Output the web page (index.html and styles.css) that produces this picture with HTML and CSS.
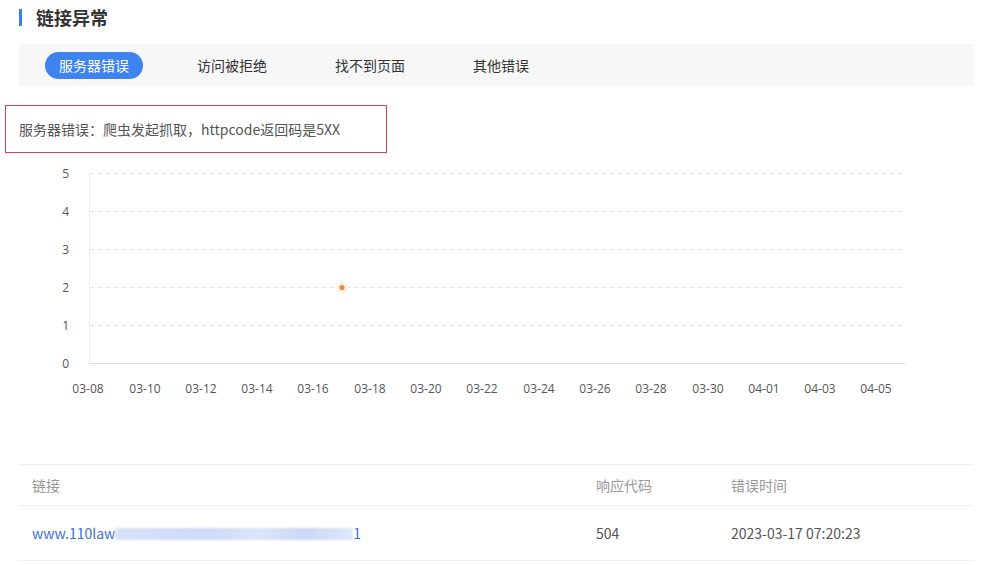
FILE: index.html
```html
<!DOCTYPE html>
<html lang="zh-CN">
<head>
<meta charset="utf-8">
<title>链接异常</title>
<link rel="stylesheet" href="styles.css">
</head>
<body>
<div class="page">
  <div class="title"><span class="title-bar"></span><h2>链接异常</h2></div>

  <div class="tabs">
    <span class="tab active">服务器错误</span>
    <span class="tab">访问被拒绝</span>
    <span class="tab">找不到页面</span>
    <span class="tab">其他错误</span>
  </div>

  <div class="info">服务器错误：爬虫发起抓取，httpcode返回码是5XX</div>

  <svg class="chart" width="990" height="311" viewBox="0 0 990 311">
    <g class="grid">
      <line x1="89" y1="20.5" x2="903" y2="20.5"/>
      <line x1="89" y1="58.5" x2="903" y2="58.5"/>
      <line x1="89" y1="96.5" x2="903" y2="96.5"/>
      <line x1="89" y1="134.5" x2="903" y2="134.5"/>
      <line x1="89" y1="172.5" x2="903" y2="172.5"/>
    </g>
    <line class="yaxis" x1="89.5" y1="20" x2="89.5" y2="211"/>
    <line class="xaxis" x1="89" y1="210.5" x2="905" y2="210.5"/>
    <g class="ylabels">
      <text x="69" y="20.5">5</text>
      <text x="69" y="58.5">4</text>
      <text x="69" y="96.5">3</text>
      <text x="69" y="134.5">2</text>
      <text x="69" y="172.5">1</text>
      <text x="69" y="210">0</text>
    </g>
    <g class="xlabels">
      <text x="88" y="235">03-08</text>
      <text x="145" y="235">03-10</text>
      <text x="201" y="235">03-12</text>
      <text x="257" y="235">03-14</text>
      <text x="313" y="235">03-16</text>
      <text x="370" y="235">03-18</text>
      <text x="426" y="235">03-20</text>
      <text x="482" y="235">03-22</text>
      <text x="539" y="235">03-24</text>
      <text x="595" y="235">03-26</text>
      <text x="651" y="235">03-28</text>
      <text x="708" y="235">03-30</text>
      <text x="764" y="235">04-01</text>
      <text x="820" y="235">04-03</text>
      <text x="876" y="235">04-05</text>
    </g>
    <circle class="halo" cx="342" cy="134.5" r="6"/>
    <circle class="dot" cx="342" cy="134.5" r="2.6"/>
  </svg>

  <div class="table">
    <div class="row head">
      <div class="cell">链接</div>
      <div class="cell">响应代码</div>
      <div class="cell">错误时间</div>
    </div>
    <div class="row">
      <div class="cell"><a class="link" href="#">www.110law<span class="blur"></span>1</a></div>
      <div class="cell">504</div>
      <div class="cell">2023-03-17 07:20:23</div>
    </div>
  </div>
</div>
</body>
</html>
```

FILE: styles.css
```css
* { box-sizing: border-box; }
html, body { margin: 0; padding: 0; background: #fff; }
body {
  font-family: "Noto Sans CJK SC", sans-serif;
  color: #555;
  width: 990px;
  height: 565px;
  overflow: hidden;
}
.page { padding: 0 16px 0 19px; }

.title { height: 34px; display: flex; align-items: center; gap: 14px; }
.title-bar { width: 3px; height: 17px; background: #3d7ff0; }
.title h2 { margin: 0; font-size: 18px; font-weight: 700; color: #333; line-height: 1; }

.tabs {
  margin-top: 10px;
  height: 42px;
  background: #f7f7f7;
  display: flex;
  align-items: center;
  gap: 40px;
  padding-left: 26px;
}
.tab {
  font-size: 14px;
  color: #333;
  padding: 0 14px;
  height: 27px;
  line-height: 27px;
  border-radius: 14px;
}
.tab.active { background: #3f83f1; color: #fff; }

.info {
  margin: 19px 0 0 -14px;
  width: 382px;
  height: 48px;
  border: 1px solid #cd4650;
  padding-left: 13px;
  display: flex;
  align-items: center;
  font-size: 14px;
  color: #555;
  text-spacing-trim: space-all;
}

.chart { display: block; margin-left: -19px; }
.chart .grid line { stroke: #e2e2e2; stroke-width: 1; stroke-dasharray: 5 3; }
.chart .yaxis { stroke: #eeeeee; }
.chart .xaxis { stroke: #dcdcdc; }
.chart text {
  font-family: "Open Sans", "Noto Sans", sans-serif;
  font-size: 12px;
  fill: #555;
  dominant-baseline: central;
}
.chart .ylabels text { text-anchor: end; }
.chart .xlabels text { text-anchor: middle; }
.chart .halo { fill: #fff6ea; }
.chart .dot { fill: #f0883e; }

.table { border-top: 1px solid #eeeeee; }
.row {
  display: grid;
  grid-template-columns: 564px 135px 1fr;
  padding-left: 13px;
  align-items: center;
  border-bottom: 1px solid #eeeeee;
  height: 55px;
  font-size: 14px;
  color: #555;
}
.row.head { height: 41px; color: #999; }
.link { color: #3a6fd8; text-decoration: none; }
.blur {
  display: inline-block;
  width: 238px;
  height: 12px;
  vertical-align: -1px;
  background: linear-gradient(90deg, #d7e2f9 0%, #cddbf7 40%, #dbe5fa 60%, #c9d8f6 80%, #dfe8fb 100%);
  filter: blur(1px);
}
```
